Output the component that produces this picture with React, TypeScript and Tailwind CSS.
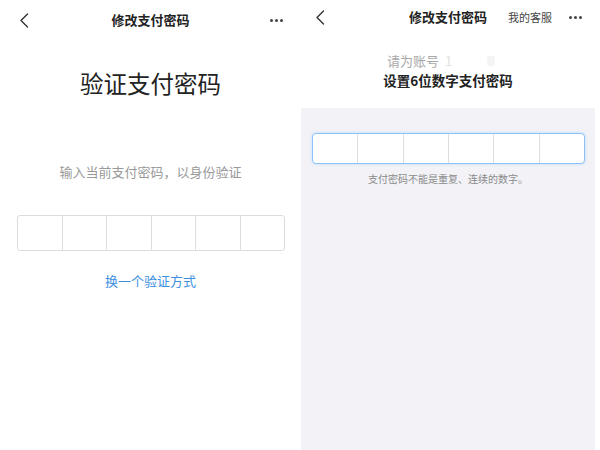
import React from "react";

const font = { fontFamily: '"Noto Sans CJK SC", "Noto Sans", sans-serif' };

function Chevron() {
  return (
    <svg width="10" height="15" viewBox="0 0 10 15" fill="none">
      <path d="M8.5 1 L2 7.5 L8.5 14" stroke="#333" strokeWidth="1.4" strokeLinecap="round" strokeLinejoin="round" />
    </svg>
  );
}

function Dots() {
  return (
    <div className="flex items-center gap-[2.5px]">
      <span className="block h-[2.5px] w-[2.5px] rounded-full bg-[#444]" />
      <span className="block h-[2.5px] w-[2.5px] rounded-full bg-[#444]" />
      <span className="block h-[2.5px] w-[2.5px] rounded-full bg-[#444]" />
    </div>
  );
}

function PinBoxes({ className }: { className: string }) {
  return (
    <div className={`flex bg-white ${className}`}>
      {[0, 1, 2, 3, 4, 5].map((i) => (
        <div key={i} className={`flex-1 ${i > 0 ? "border-l border-[#dedede]" : ""}`} />
      ))}
    </div>
  );
}

export default function App() {
  return (
    <div className="flex h-[450px] w-[600px] bg-white text-[#222]" style={font}>
      {/* current password check */}
      <div className="flex w-[301px] flex-col">
        <div className="relative flex h-[40px] items-center justify-center">
          <div className="absolute left-[19px] top-[13px]">
            <Chevron />
          </div>
          <span className="text-[13px] font-bold text-[#222]">修改支付密码</span>
          <div className="absolute left-[270px] top-[19px]">
            <Dots />
          </div>
        </div>
        <div className="mt-[27px] text-center text-[23.5px] leading-[32px] text-[#222]">验证支付密码</div>
        <div className="mt-[63px] text-center text-[13px] leading-[20px] text-[#999]">
          输入当前支付密码，以身份验证
        </div>
        <PinBoxes className="ml-[17px] mt-[33px] h-[36px] w-[268px] rounded-[3px] border border-[#dcdcdc]" />
        <div className="mt-[20px] text-center text-[13px] leading-[20px] text-[#3d8fe0]">换一个验证方式</div>
      </div>

      {/* new password */}
      <div className="flex w-[294px] flex-col">
        <div className="relative flex h-[34px] items-center justify-center">
          <div className="absolute left-[14px] top-[10px]">
            <Chevron />
          </div>
          <span className="text-[13px] font-bold text-[#222]">修改支付密码</span>
          <span className="absolute left-[207px] top-[9px] text-[11px] leading-[16px] text-[#444]">我的客服</span>
          <div className="absolute left-[268px] top-[16px]">
            <Dots />
          </div>
        </div>
        <div className="relative mt-[18px] h-[18px] text-[13px] leading-[18px] text-[#a8a8a8]">
          <span className="absolute left-[86px]">请为账号</span>
          <span className="absolute left-[144px] text-[#e2e2e2]">1</span>
          <span className="absolute left-[186px] top-[4px] block h-[10px] w-[8px] rounded-[2px] bg-[#f4f4f4]" />
        </div>
        <div className="mt-[1px] text-center text-[13.5px] font-bold leading-[18px] text-[#222]">设置6位数字支付密码</div>
        <div className="mt-[19px] flex flex-1 flex-col bg-[#f2f2f7]">
          <PinBoxes className="ml-[11px] mt-[25px] h-[31px] w-[273px] rounded-[4px] border border-[#8cc2f7] shadow-[0_0_3px_#b9dafb]" />
          <div className="mt-[8px] text-center text-[10px] leading-[14px] text-[#8a8a8a]">
            支付密码不能是重复、连续的数字。
          </div>
        </div>
      </div>
      <div className="flex-1" />
    </div>
  );
}
